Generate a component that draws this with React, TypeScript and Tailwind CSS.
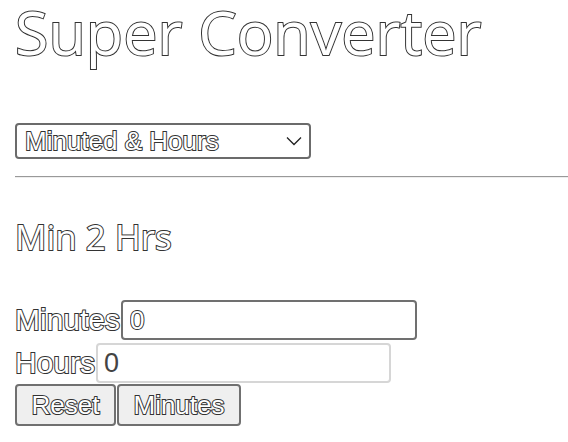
import * as React from 'react';

// white glyphs traced with a thin dark line outside the letter shape
const outline =
  'text-white [-webkit-text-stroke:2px_#333] [paint-order:stroke_fill]';

export default function App() {
  const [mode, setMode] = React.useState('mh');
  const [minutes, setMinutes] = React.useState('0');
  const [hours, setHours] = React.useState('0');

  return (
    <div className="min-h-[442px] bg-white pl-[15px] font-['Liberation_Sans',Arial,sans-serif]">
      <h1
        className={`pt-[2px] font-['Open_Sans',sans-serif] text-[61px] leading-[60px] font-normal ${outline}`}
      >
        Super Converter
      </h1>

      <div className="relative mt-[61px] w-[296px]">
        <select
          value={mode}
          onChange={(e) => setMode(e.target.value)}
          className={`h-[36px] w-full appearance-none rounded-[4px] border-2 border-[#6b6b6b] bg-white pl-[8px] text-[26px] leading-none ${outline}`}
        >
          <option value="mh">Minuted &amp; Hours</option>
        </select>
        <svg
          className="pointer-events-none absolute right-[9px] top-[13px]"
          width="16"
          height="10"
          viewBox="0 0 16 10"
          fill="none"
          stroke="#222"
          strokeWidth="1.3"
        >
          <path d="M1 1.5 L8 8.5 L15 1.5" />
        </svg>
      </div>

      <div className="mt-[17px] border-t border-b border-t-[#999] border-b-[#eee]" />

      <h2
        className={`mt-[41px] font-['Open_Sans',sans-serif] text-[35px] leading-[35px] font-normal ${outline}`}
      >
        Min 2 Hrs
      </h2>

      <div className="mt-[46px] flex items-center">
        <span className={`text-[30px] leading-none ${outline}`}>Minutes</span>
        <input
          value={minutes}
          onChange={(e) => setMinutes(e.target.value)}
          className={`ml-[1px] h-[40px] w-[296px] rounded-[4px] border-2 border-[#707070] px-[7px] text-[26px] outline-none ${outline}`}
        />
      </div>

      <div className="mt-[3px] flex items-center">
        <span className={`text-[30px] leading-none ${outline}`}>Hours</span>
        <input
          value={hours}
          readOnly
          onChange={(e) => setHours(e.target.value)}
          className="ml-[1px] h-[40px] w-[295px] rounded-[4px] border-2 border-[#d6d6d6] px-[6px] text-[27px] text-[#444] outline-none"
        />
      </div>

      <div className="mt-[1px] flex gap-[1px]">
        <button
          onClick={() => {
            setMinutes('0');
            setHours('0');
          }}
          className={`h-[42px] w-[101px] rounded-[4px] border-2 border-[#707070] bg-[#efefef] text-[26px] ${outline}`}
        >
          Reset
        </button>
        <button
          className={`h-[42px] w-[124px] rounded-[4px] border-2 border-[#707070] bg-[#efefef] text-[26px] ${outline}`}
        >
          Minutes
        </button>
      </div>
    </div>
  );
}
